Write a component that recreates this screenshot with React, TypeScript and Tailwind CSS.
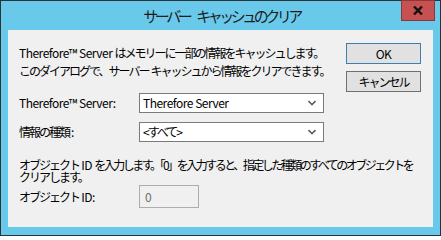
import React from 'react';

const font = { fontFamily: '"Noto Sans CJK JP", "Noto Sans", sans-serif' };

// Japanese run, condensed to the narrow kana of the dialog font
const J = ({ children }: { children: React.ReactNode }) => <span className="tracking-[-2px]">{children}</span>;

const Combo = ({ value }: { value: React.ReactNode }) => (
  <div className="flex h-[20px] w-[185px] items-center justify-between border border-[#7a7a7a] bg-white pl-[3px] pr-[7px] leading-none text-black">
    <span className="whitespace-nowrap">{value}</span>
    <svg width="8" height="6" viewBox="0 0 8 6">
      <path d="M0.5 1 L4 4.5 L7.5 1" fill="none" stroke="#606060" strokeWidth="1.6" />
    </svg>
  </div>
);

const App = () => {
  return (
    <div className="h-[236px] w-[441px] border border-[#2b3238] bg-[#69c9ea]" style={font}>
      {/* title bar */}
      <div className="relative flex h-[29px] items-center justify-center pl-[2px] pt-[1px]">
        <span className="whitespace-nowrap text-[15px] tracking-[-3.5px] text-[#1c1c1c]">サーバー</span>
        <span className="ml-[7px] whitespace-nowrap text-[15px] tracking-[-3.5px] text-[#1c1c1c]">キャッシュのクリア</span>
        <button className="absolute right-[5px] top-[-1px] flex h-[21px] w-[34px] items-center justify-center border border-[#8a3a36] bg-[#c75050]">
          <svg width="10" height="9" viewBox="0 0 10 9">
            <path d="M1 0.5 L9 8.5 M9 0.5 L1 8.5" stroke="#111" strokeWidth="2.4" />
          </svg>
        </button>
      </div>

      {/* client area */}
      <div className="mx-[7px] h-[197px] whitespace-nowrap bg-[#f0f0f0] pl-[11px] pr-[12px] text-[12px] tracking-[-0.5px] text-black">
        <div className="flex">
          <div className="flex-1 pt-[14px]">
            <div className="leading-[18px]">
              Therefore™ Server <J>はメモリーに一部の情報をキャッシュします。</J>
            </div>
            <div className="leading-[18px]">
              <J>このダイアログで、サーバー</J> <J>キャッシュから情報をクリアできます。</J>
            </div>
            <div className="mt-[13px] flex items-center">
              <span className="w-[120px]">Therefore™ Server:</span>
              <Combo value="Therefore Server" />
            </div>
            <div className="mt-[9px] flex items-center">
              <span className="w-[120px]">
                <J>情報の種類</J>
                <span className="ml-[2px]">:</span>
              </span>
              <Combo value={<J>&lt;すべて&gt;</J>} />
            </div>
          </div>
          <div className="flex flex-col gap-[7px] pt-[13px]">
            <button className="h-[21px] w-[75px] border border-[#3c7fb1] bg-[#e1e1e1] leading-none">OK</button>
            <button className="h-[21px] w-[75px] border border-[#707070] bg-[#e1e1e1] leading-none">
              <J>キャンセル</J>
            </button>
          </div>
        </div>

        <div className="mt-[17px] leading-[12px]">
          <div>
            <J>オブジェクト</J> ID{' '}
            <span className="tracking-[-2.5px]">を入力します。「0」を入力すると、指定した種類のすべてのオブジェクトを</span>
          </div>
          <div>
            <J>クリアします。</J>
          </div>
        </div>
        <div className="mt-[2px] flex items-center">
          <span className="w-[120px]">
            <J>オブジェクト</J> ID:
          </span>
          <div className="flex h-[23px] w-[60px] items-start border border-[#adadad] bg-[#f0f0f0] pl-[5px] pt-[2px] text-[#6d6d6d]">0</div>
        </div>
      </div>
    </div>
  );
};

export default App;
